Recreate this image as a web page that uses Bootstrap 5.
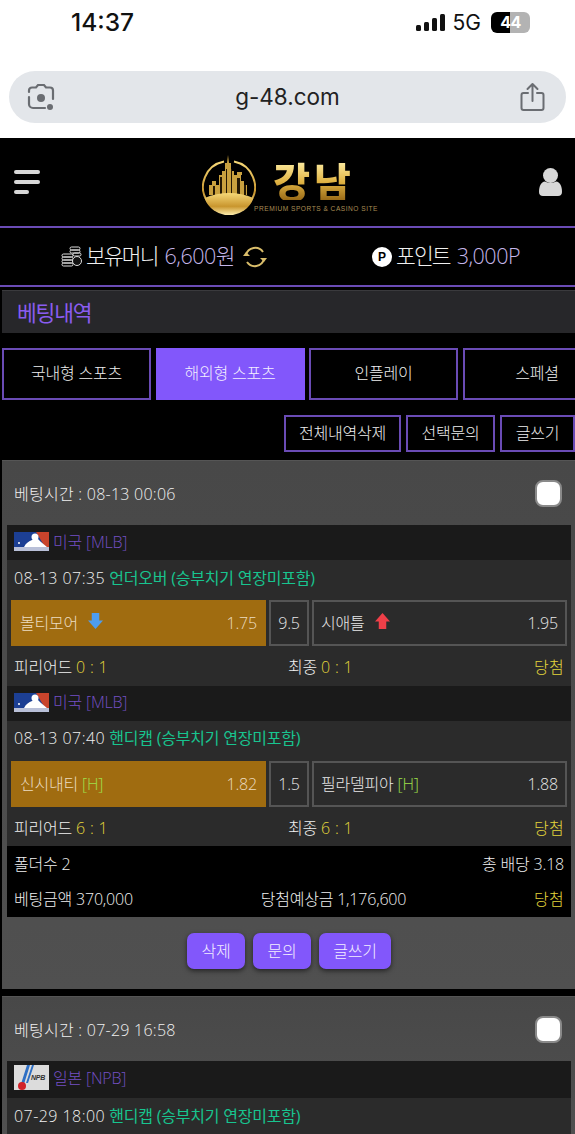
<!DOCTYPE html>
<html lang="ko">
<head>
    <meta charset="UTF-8">
    <meta name="viewport" content="width=device-width, initial-scale=1.0">
    <title>베팅내역</title>
    <link href="https://cdn.jsdelivr.net/npm/bootstrap@5.3.3/dist/css/bootstrap.min.css" rel="stylesheet">
    <style>
        html, body { background: #000; }
        body {
            font-family: "Open Sans", "Noto Sans CJK KR", "Noto Sans", sans-serif;
            font-weight: 300;
            color: #e6e6e6;
            font-size: 16px;
            letter-spacing: -.2px;
            height: 1134px;
            overflow: hidden;
        }
        .phone-top { background: #fff; height: 138px; padding: 0 9px; color: #111; font-family: Inter, "Liberation Sans", sans-serif; font-weight: 400; letter-spacing: 0; }
        .status-row { height: 71px; padding: 0 36px 27px 62px; }
        .clock { font-size: 24.5px; font-weight: 500; line-height: 1; }
        .net { font-size: 21px; line-height: 1; margin-right: 10px; }
        .url-pill { height: 52px; background: #e3e6ea; border-radius: 26px; padding: 0 21px 0 18px; font-size: 22.5px; color: #222; }
        .batt { width: 39px; height: 21px; border-radius: 6px; background: linear-gradient(90deg, #000 50%, #b3b3b3 50%); color: #fff; font-size: 16px; font-weight: 700; line-height: 21px; text-align: center; letter-spacing: -0.5px; }

        .top-head { height: 88px; padding: 0 13px 0 14px; background: #000; }
        .logo-wrap { margin-top: 5px; gap: 0; font-family: "Noto Sans CJK KR", sans-serif; letter-spacing: 0; }
        .logo-words { margin-left: -2px; padding-top: 4px; }
        .logo-word {
            font-size: 40px; font-weight: 900; line-height: 40px; letter-spacing: 4px; padding-right: 4px;
            background: linear-gradient(180deg, #fff0a8 0%, #e0b343 55%, #9a6b18 100%);
            -webkit-background-clip: text; background-clip: text; color: transparent;
        }
        .logo-sub { font-family: "Liberation Sans", sans-serif; font-size: 6.6px; letter-spacing: .5px; color: #a98d55; font-weight: 400; line-height: 9px; margin-top: 4px; white-space: nowrap; }
        .money-row { height: 61px; border-top: 2px solid #6a4bb5; border-bottom: 2px solid #6a4bb5; font-size: 21.5px; color: #f0f0f0; padding: 0 55px 0 61px; }
        .money-name { letter-spacing: -1.9px; }
        .money-val { color: #c5b6ea; letter-spacing: -.5px; margin-left: 7px; }
        .p-mark { width: 20px; height: 20px; border-radius: 50%; background: #fff; color: #000; font: 700 12px/20px "Liberation Sans", sans-serif; text-align: center; letter-spacing: 0; }

        .page-title { margin: 3px 0 15px 2px; height: 43px; background: #27272a; color: #8a5cf0; font-size: 21.5px; line-height: 41px; padding-left: 15px; font-weight: 400; letter-spacing: -1.2px; border-top: 1px solid #3a3a3d; font-family: "Noto Sans CJK KR", sans-serif; }
        .tab-row { gap: 4.5px; margin-left: 2px; overflow: hidden; }
        .tab-btn { flex: 0 0 149px; height: 52px; border: 2px solid #6a4bb5; border-radius: 0; color: #eee; font-size: 16px; font-weight: 300; line-height: 46px; padding: 0; background: #000; letter-spacing: -.2px; }
        .tab-btn.on, .tab-btn.on:hover { background: #8257fb; border-color: #8257fb; color: #f3eeff; }
        .action-row { gap: 5px; margin: 15px 0 8px; height: 37px; }
        .act-btn { height: 37px; border: 2px solid #6a4bb5; border-radius: 0; color: #eee; font-size: 16px; font-weight: 300; line-height: 32px; padding: 0; background: #000; letter-spacing: -.2px; }
        .act-wide { width: 117px; }
        .act-mid { width: 89px; }
        .act-short { width: 75px; }

        .bet-box { margin-left: 2px; background: linear-gradient(180deg, #484848 0%, #505050 100%); padding: 0 4px 0 5px; margin-bottom: 7px; border-top: 1px solid #555; }
        .bet-head { height: 64px; padding: 2px 9px 0 7px; color: #f0f0f0; letter-spacing: .25px; }
        .tick { width: 27px; height: 27px; background: #fff; border: 2px solid #8a8a8a; border-radius: 8px; margin-top: -2px; }
        .league-bar { height: 35px; background: #1a1a1a; padding: 0 0 2px 7px; gap: 4px; color: #7450c4; }
        .league-tall { height: 37px; padding-bottom: 4px; }
        .game-body { background: #2b2b2b; }
        .game-time { height: 40px; padding: 0 0 5px 7px; color: #f0f0f0; letter-spacing: .45px; }
        .game-type { color: #18c48f; margin-left: 4px; font-weight: 400; letter-spacing: -.2px; }
        .odds-row { height: 46px; padding: 0 4px; gap: 3px; }
        .odds-cell { border: 2px solid #555; background: #2b2b2b; color: #e8e8e8; padding: 0 7px; }
        .odds-home { flex: 0 0 255px; }
        .odds-mid { flex: 0 0 40px; justify-content: center; padding: 0; }
        .odds-away { flex: 1 1 auto; }
        .odds-picked { background: #a06c10; border-color: #a06c10; color: #ecdcc0; }
        .odds-arrow { margin: 0 0 5px 2px; }
        .home-tag { color: #9fe04a; }
        .score-row { height: 39.5px; padding: 3px 7px 0; color: #f0f0f0; }
        .score-left { flex: 0 0 274px; }
        .gold { color: #e3d53b; letter-spacing: .3px; }
        .sum-box { background: #000; padding: 0 7px; height: 71px; color: #f0f0f0; }
        .sum-line { height: 35.5px; }
        .foot-btns { height: 72px; gap: 8px; padding-top: 16px; padding-bottom: 20px; }
        .row-btn { height: 36px; background: #8257fb; color: #f3eeff; border: 0; border-radius: 7px; font-size: 16px; font-weight: 300; padding: 0; box-shadow: 0 2px 5px rgba(0,0,0,.55); letter-spacing: -.2px; }
        .w-58 { width: 58px; }
        .w-72 { width: 72px; }
    </style>
</head>
<body>
    <div class="phone-top">
        <div class="status-row d-flex justify-content-between align-items-center">
            <span class="clock">14:37</span>
            <span class="d-flex align-items-center">
                <svg class="me-2" width="29" height="19" viewBox="0 0 29 19"><rect x="0" y="12" width="5" height="6" rx="1.5" fill="#111"/><rect x="8" y="9" width="5" height="9" rx="1.5" fill="#111"/><rect x="16" y="5" width="5" height="13" rx="1.5" fill="#111"/><rect x="24" y="1" width="5" height="17" rx="1.5" fill="#111"/></svg>
                <span class="net">5G</span>
                <span class="batt">44</span>
            </span>
        </div>
        <div class="url-pill d-flex justify-content-between align-items-center">
            <svg width="28" height="28" viewBox="0 0 28 28" fill="none" stroke="#6a6d72" stroke-width="2.2" stroke-linecap="round"><path d="M2 9v-1.500a3 3 0 0 1 3-3h4l2-2.500h6l2 2.500h4a3 3 0 0 1 3 3V16"/><path d="M2 14v7a4 4 0 0 0 4 4h12"/><circle cx="14" cy="15" r="4" fill="#6a6d72" stroke="none"/><circle cx="23" cy="24" r="3" fill="#6a6d72" stroke="none"/></svg>
            <span>g-48.com</span>
            <svg width="25" height="30" viewBox="0 0 25 30" fill="none" stroke="#6a6d72" stroke-width="2" stroke-linecap="round" stroke-linejoin="round"><path d="M8 11H3.500a2 2 0 0 0-2 2v13a2 2 0 0 0 2 2h18a2 2 0 0 0 2-2V13a2 2 0 0 0-2-2H17"/><path d="M12.500 19V2M7.500 7l5-5 5 5"/></svg>
        </div>
    </div>

    <header class="top-head d-flex justify-content-between align-items-center">
        <svg width="27" height="26" viewBox="0 0 27 26" fill="#d8d8d8"><rect x="0" y="1" width="26" height="4" rx="2"/><rect x="0" y="11" width="26" height="4" rx="2"/><rect x="0" y="21" width="15" height="4" rx="2"/></svg>
        <div class="logo-wrap d-flex align-items-center">
            <svg width="54" height="60" viewBox="0 0 54 60">
                <defs>
                    <linearGradient id="gold1" x1="0" y1="0" x2="0" y2="1"><stop offset="0" stop-color="#f6d878"/><stop offset=".6" stop-color="#c9962e"/><stop offset="1" stop-color="#fff0b0"/></linearGradient>
                </defs>
                <path d="M22 6.500A26 26 0 1 0 32 6.500" fill="none" stroke="url(#gold1)" stroke-width="2"/>
                <path d="M7 40V30h3v-4h4v4h3V20h3v-4h3V8h2l1-8 1 8h2v8h3v4h3v-3h5v3h-1v6h3v4h3v10z" fill="#c9a13f"/>
                <path d="M11 31h2v9h-2zM18 22h2v18h-2zM24 14h1v26h-1zM29 14h1v26h-1zM35 23h3v17h-3zM42 30h2v10h-2z" fill="#241804"/>
                <path d="M2.500 43q24.500-10 49 0A26 26 0 0 1 2.500 43z" fill="url(#gold1)"/>
            </svg>
            <div class="logo-words d-flex flex-column align-items-center">
                <span class="logo-word">강남</span>
                <span class="logo-sub">PREMIUM SPORTS &amp; CASINO SITE</span>
            </div>
        </div>
        <svg width="23" height="28" viewBox="0 0 23 28" fill="#d8d8d8"><circle cx="11.500" cy="7.500" r="7.500"/><path d="M0 24c0-6 2-10 6-10.500q5.500 3 11 0c4 .5 6 4.500 6 10.500 0 2.500-1.500 4-4 4H4c-2.500 0-4-1.500-4-4z"/></svg>
    </header>

    <div class="money-row d-flex justify-content-between align-items-center">
        <div class="d-flex align-items-center">
            <svg class="me-1" width="21" height="21" viewBox="0 0 21 21" fill="none" stroke="#ddd" stroke-width="1"><rect x="1" y="8" width="11" height="3" rx="1.500"/><rect x="1" y="11" width="11" height="3" rx="1.500"/><rect x="1" y="14" width="11" height="3" rx="1.500"/><rect x="1" y="17" width="11" height="3" rx="1.500"/><rect x="9" y="1" width="10" height="3" rx="1.500"/><rect x="9" y="4" width="10" height="3" rx="1.500"/><rect x="12" y="7" width="8" height="3" rx="1.500"/><circle cx="16" cy="15" r="4.500" fill="#111"/></svg>
            <span class="money-name">보유머니</span> <span class="money-val">6,600원</span>
            <svg class="ms-2" width="24" height="22" viewBox="0 0 24 22" fill="none" stroke="#d9bd6a" stroke-width="2"><path d="M3 9a9.500 9.500 0 0 1 17-3"/><path d="M21 13a9.500 9.500 0 0 1-17 3"/><path d="M0 10h7L3 6zM24 12h-7l4 4z" fill="#d9bd6a" stroke="none"/></svg>
        </div>
        <div class="d-flex align-items-center">
            <span class="p-mark me-1">P</span>
            <span class="money-name">포인트</span> <span class="money-val">3,000P</span>
        </div>
    </div>

    <h1 class="page-title">베팅내역</h1>

    <div class="tab-row d-flex">
        <a class="tab-btn btn">국내형 스포츠</a>
        <a class="tab-btn btn on">해외형 스포츠</a>
        <a class="tab-btn btn">인플레이</a>
        <a class="tab-btn btn">스페셜</a>
    </div>

    <div class="action-row d-flex justify-content-end">
        <a class="act-btn act-wide btn">전체내역삭제</a>
        <a class="act-btn act-mid btn">선택문의</a>
        <a class="act-btn act-short btn">글쓰기</a>
    </div>

    <section class="bet-box">
        <div class="bet-head d-flex justify-content-between align-items-center">
            <span>베팅시간 : 08-13 00:06</span>
            <span class="tick"></span>
        </div>

        <div class="league-bar d-flex align-items-center">
            <svg width="35" height="19" viewBox="0 0 35 19"><rect width="35" height="19" fill="#1c3f94"/><path d="M22 0h13v15H31z" fill="#c8442c"/><circle cx="21" cy="5" r="3.500" fill="#fff"/><path d="M10 15c2-4 5-6 8-7l6-1 3 3 6 5z" fill="#fff"/><circle cx="5" cy="11" r="1" fill="#fff"/><rect y="15" width="35" height="4" fill="#b9c0d8"/></svg>
            <span>미국 [MLB]</span>
        </div>
        <div class="game-body">
            <div class="game-time d-flex align-items-center">08-13 07:35 <span class="game-type">언더오버 (승부치기 연장미포함)</span></div>
            <div class="odds-row d-flex">
                <div class="odds-cell odds-home odds-picked d-flex justify-content-between align-items-center">
                    <span class="d-flex align-items-center gap-2">볼티모어 <svg class="odds-arrow" width="15" height="16" viewBox="0 0 16 17"><path d="M4 0h8v8h4l-8 9-8-9h4z" fill="#4d9df0"/></svg></span><span>1.75</span>
                </div>
                <div class="odds-cell odds-mid d-flex align-items-center">9.5</div>
                <div class="odds-cell odds-away d-flex justify-content-between align-items-center">
                    <span class="d-flex align-items-center gap-2">시애틀 <svg class="odds-arrow" width="15" height="16" viewBox="0 0 16 17"><path d="M4 17h8V9h4L8 0 0 9h4z" fill="#ef3f48"/></svg></span><span>1.95</span>
                </div>
            </div>
            <div class="score-row d-flex align-items-center">
                <span class="score-left">피리어드 <span class="gold">0 : 1</span></span>
                <span>최종 <span class="gold">0 : 1</span></span>
                <span class="gold ms-auto">당첨</span>
            </div>
        </div>

        <div class="league-bar d-flex align-items-center">
            <svg width="35" height="19" viewBox="0 0 35 19"><rect width="35" height="19" fill="#1c3f94"/><path d="M22 0h13v15H31z" fill="#c8442c"/><circle cx="21" cy="5" r="3.500" fill="#fff"/><path d="M10 15c2-4 5-6 8-7l6-1 3 3 6 5z" fill="#fff"/><circle cx="5" cy="11" r="1" fill="#fff"/><rect y="15" width="35" height="4" fill="#b9c0d8"/></svg>
            <span>미국 [MLB]</span>
        </div>
        <div class="game-body">
            <div class="game-time d-flex align-items-center">08-13 07:40 <span class="game-type">핸디캡 (승부치기 연장미포함)</span></div>
            <div class="odds-row d-flex">
                <div class="odds-cell odds-home odds-picked d-flex justify-content-between align-items-center">
                    <span>신시내티 <span class="home-tag">[H]</span></span><span>1.82</span>
                </div>
                <div class="odds-cell odds-mid d-flex align-items-center">1.5</div>
                <div class="odds-cell odds-away d-flex justify-content-between align-items-center">
                    <span>필라델피아 <span class="home-tag">[H]</span></span><span>1.88</span>
                </div>
            </div>
            <div class="score-row d-flex align-items-center">
                <span class="score-left">피리어드 <span class="gold">6 : 1</span></span>
                <span>최종 <span class="gold">6 : 1</span></span>
                <span class="gold ms-auto">당첨</span>
            </div>
        </div>

        <div class="sum-box">
            <div class="sum-line d-flex justify-content-between align-items-center">
                <span>폴더수 2</span><span>총 배당 3.18</span>
            </div>
            <div class="sum-line d-flex justify-content-between align-items-center">
                <span>베팅금액 370,000</span><span>당첨예상금 1,176,600</span><span class="gold">당첨</span>
            </div>
        </div>

        <div class="foot-btns d-flex justify-content-center">
            <button class="row-btn btn w-58">삭제</button>
            <button class="row-btn btn w-58">문의</button>
            <button class="row-btn btn w-72">글쓰기</button>
        </div>
    </section>

    <section class="bet-box">
        <div class="bet-head d-flex justify-content-between align-items-center">
            <span>베팅시간 : 07-29 16:58</span>
            <span class="tick"></span>
        </div>
        <div class="league-bar league-tall d-flex align-items-center">
            <svg width="35" height="25" viewBox="0 0 35 25"><rect width="35" height="25" fill="#dcdcdc"/><path d="M7 19L13 0h3l-6 19zM12 18L18 0h2l-6 18z" fill="#2e6fc4"/><circle cx="8" cy="21" r="4" fill="#d2232a"/><text x="17" y="15" font-family="Liberation Sans, sans-serif" font-size="7" font-weight="700" font-style="italic" fill="#333">NPB</text></svg>
            <span>일본 [NPB]</span>
        </div>
        <div class="game-body">
            <div class="game-time d-flex align-items-center">07-29 18:00 <span class="game-type">핸디캡 (승부치기 연장미포함)</span></div>
        </div>
    </section>

    <script src="https://cdn.jsdelivr.net/npm/bootstrap@5.3.3/dist/js/bootstrap.bundle.min.js"></script>
</body>
</html>
